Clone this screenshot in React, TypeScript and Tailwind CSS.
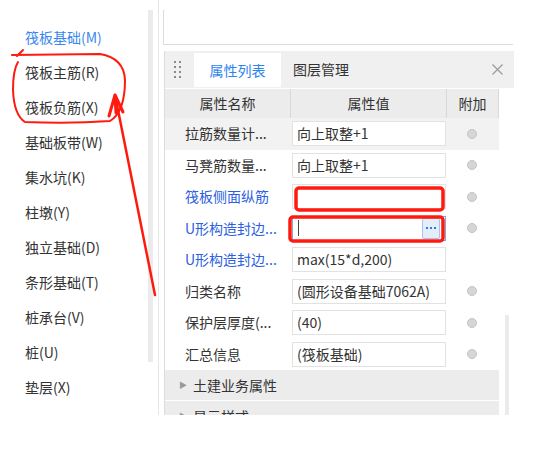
import React from 'react';

const FONT = { fontFamily: "'Noto Sans CJK SC', 'Liberation Sans', sans-serif" };

const LEFT_ITEMS = [
  '筏板基础(M)',
  '筏板主筋(R)',
  '筏板负筋(X)',
  '基础板带(W)',
  '集水坑(K)',
  '柱墩(Y)',
  '独立基础(D)',
  '条形基础(T)',
  '桩承台(V)',
  '桩(U)',
  '垫层(X)',
  '地沟(G)',
];

type Row = { name: string; value: string; blue?: boolean; radio?: boolean; focus?: boolean; hl?: boolean };

const ROWS: Row[] = [
  { name: '拉筋数量计...', value: '向上取整+1', radio: true, hl: true },
  { name: '马凳筋数量...', value: '向上取整+1', radio: true },
  { name: '筏板侧面纵筋', value: '', blue: true, radio: true },
  { name: 'U形构造封边...', value: '', blue: true, radio: true, focus: true },
  { name: 'U形构造封边...', value: 'max(15*d,200)', blue: true },
  { name: '归类名称', value: '(圆形设备基础7062A)', radio: true },
  { name: '保护层厚度(...', value: '(40)', radio: true },
  { name: '汇总信息', value: '(筏板基础)', radio: true },
];

function Radio() {
  return <span className="block w-[10px] h-[10px] rounded-full bg-[#d6d6d6] border border-[#c4c4c4]" />;
}

function PropRow({ row }: { row: Row }) {
  return (
    <div className={`flex shrink-0 h-[31.5px] ${row.hl ? 'bg-[#f2f2f2]' : 'bg-white'}`}>
      <div
        className={`w-[126px] pl-[20px] flex items-center text-[14px] whitespace-nowrap ${
          row.blue ? 'text-[#2d5fe0]' : 'text-[#333]'
        }`}
      >
        {row.name}
      </div>
      <div className="w-[156px] flex items-center pl-[1px] pr-[1px]">
        {row.focus ? (
          <div className="relative w-[155px] h-[25px] bg-white border border-[#7fa8e6] flex items-center">
            <span className="ml-[5px] w-[1px] h-[16px] bg-[#444]" />
            <span className="absolute right-[5px] top-[1px] w-[18px] h-[21px] rounded-[2px] bg-[#e4eefb] border border-[#a5c3ee] flex items-center justify-center gap-[2px]">
              <span className="w-[2px] h-[2px] bg-[#2f7be6]" />
              <span className="w-[2px] h-[2px] bg-[#2f7be6]" />
              <span className="w-[2px] h-[2px] bg-[#2f7be6]" />
            </span>
          </div>
        ) : (
          <div className="w-[155px] h-[25px] bg-white border border-[#e2e2e2] flex items-center pl-[4px] text-[14px] text-[#333] whitespace-nowrap overflow-hidden">
            {row.value}
          </div>
        )}
      </div>
      <div className="w-[52px] flex items-center justify-center pr-[2px]">{row.radio && <Radio />}</div>
    </div>
  );
}

export default function App() {
  return (
    <div className="relative w-[548px] h-[449px] bg-white overflow-hidden" style={FONT}>
      <div className="flex items-start h-[415px] overflow-hidden">
        {/* Left component list */}
        <div className="w-[148px] shrink-0 pt-[20px] pl-[25px] flex flex-col">
          {LEFT_ITEMS.map((item, i) => (
            <div
              key={i}
              className={`h-[35px] shrink-0 flex items-center text-[14px] whitespace-nowrap ${
                i === 0 ? 'text-[#3a87ee]' : 'text-[#333]'
              }`}
            >
              {item}
            </div>
          ))}
        </div>

        {/* left scrollbar */}
        <div className="w-[5px] shrink-0 mt-[10px] h-[352px] bg-[#ebebeb]" />
        <div className="w-[1px] shrink-0 ml-[5px] h-[415px] bg-[#e6e6e6]" />

        {/* Right side */}
        <div className="ml-[4px] shrink-0 flex flex-col">
          <div className="shrink-0 mt-[10px] w-[350px] h-[35px] border-l border-b border-[#dcdcdc]" />

          <div className="shrink-0 mt-[6px] w-[350px] flex flex-col border-l border-[#dcdcdc] ml-[1px]">
            {/* header with tabs */}
            <div className="shrink-0 h-[37px] bg-[#f0f0f0] flex items-center">
              <div className="ml-[9px] grid grid-cols-2 gap-x-[3px] gap-y-[3px]">
                {Array.from({ length: 8 }).map((_, i) => (
                  <span key={i} className="w-[2px] h-[2px] bg-[#8a8a8a]" />
                ))}
              </div>
              <div className="ml-[13px] mt-[1px] w-[87px] h-[34px] bg-white flex items-center justify-center text-[14px] text-[#2b84f0]">
                属性列表
              </div>
              <div className="ml-[12px] text-[14px] text-[#333]">图层管理</div>
              <div className="ml-auto mr-[11px] w-[11px] h-[11px]">
                <svg viewBox="0 0 11 11" width="11" height="11">
                  <path d="M0.5 0.5 L10.5 10.5 M10.5 0.5 L0.5 10.5" stroke="#9a9a9a" strokeWidth="1.2" fill="none" />
                </svg>
              </div>
            </div>

            <div className="flex shrink-0">
              <div className="w-[334px] flex flex-col">
                {/* column header */}
                <div className="shrink-0 mt-[1px] h-[29px] flex bg-[#ececec] text-[14px] text-[#333]">
                  <div className="w-[126px] flex items-center justify-center border-r border-[#d8d8d8]">属性名称</div>
                  <div className="w-[156px] flex items-center justify-center border-r border-[#d8d8d8]">属性值</div>
                  <div className="w-[52px] flex items-center justify-center border-r border-[#d8d8d8]">附加</div>
                </div>

                {ROWS.map((r, i) => (
                  <PropRow key={i} row={r} />
                ))}

                <div className="shrink-0 h-[30px] bg-[#ececec] flex items-center text-[14px] text-[#333]">
                  <span className="ml-[14px] text-[8px] text-[#999]">▶</span>
                  <span className="ml-[6px]">土建业务属性</span>
                </div>
                <div className="shrink-0 mt-[1px] h-[30px] bg-[#ececec] flex items-center text-[14px] text-[#333]">
                  <span className="ml-[14px] text-[8px] text-[#999]">▶</span>
                  <span className="ml-[6px]">显示样式</span>
                </div>
              </div>
              {/* right scrollbar */}
              <div className="ml-[6px] mt-[227px] w-[4px] h-[110px] bg-[#ebebeb]" />
            </div>
          </div>
        </div>
      </div>

      {/* red annotations */}
      <svg className="absolute inset-0 pointer-events-none" width="548" height="449" viewBox="0 0 548 449">
        <g stroke="#ff1a0f" fill="none" strokeLinecap="round" strokeLinejoin="round">
          <path
            d="M12 55 L100 54 Q124 58 125 80 Q125 112 110 121 Q70 124 25 122 Q14 115 13 90 Q13 70 18 62 M17 56 L23 50"
            strokeWidth="2"
          />
          <path d="M155 295 L115 95" strokeWidth="2.5" />
          <path d="M115 95 L109 116 M115 95 L123 112 M115 97 L116 113" strokeWidth="3" />
          <rect x="296" y="188" width="147" height="22" rx="3" strokeWidth="3.5" />
          <rect x="290" y="217" width="153" height="24" rx="3" strokeWidth="3.5" />
        </g>
      </svg>
    </div>
  );
}
